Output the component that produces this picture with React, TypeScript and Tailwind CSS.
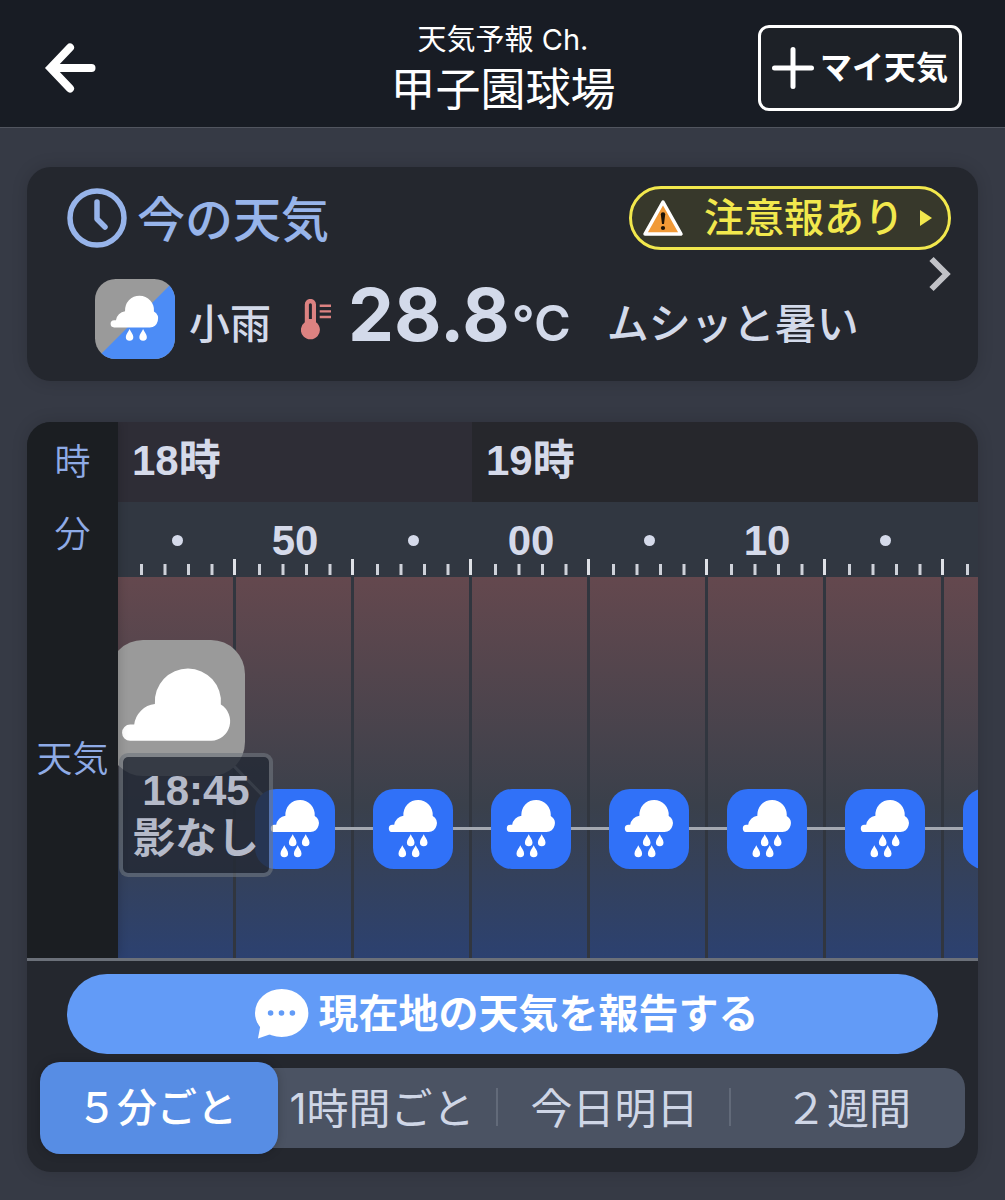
import { useState } from "react"

interface Slot {
  label: string
  weather: "cloud" | "rain"
}

const slots: Slot[] = [
  { label: "", weather: "cloud" },
  { label: "50", weather: "rain" },
  { label: "", weather: "rain" },
  { label: "00", weather: "rain" },
  { label: "", weather: "rain" },
  { label: "10", weather: "rain" },
  { label: "", weather: "rain" },
  { label: "", weather: "rain" },
]

const CLOUD =
  "M19.4 43a3.6 3.6 0 0 1 0-7.2h1.8A10.4 10.4 0 0 1 30.4 26.7A14.7 14.7 0 1 1 59.7 26.9A8.7 8.7 0 0 1 55.5 43z"
const DROP = "c1 3 3.8 5 3.8 8.1a3.8 3.8 0 0 1-7.6 0c0-3.1 2.8-5.1 3.8-8.1z"

function CloudyIcon() {
  return (
    <svg viewBox="0 0 136 136" className="size-[136px] shrink-0" aria-hidden="true">
      <rect width="136" height="136" rx="34" fill="#9a9a9a" />
      <path d={CLOUD} fill="#fff" transform="translate(-22.5 4) scale(2.25)" />
    </svg>
  )
}

function RainIcon() {
  return (
    <svg viewBox="0 0 80 80" className="size-20 shrink-0" aria-hidden="true">
      <rect width="80" height="80" rx="21" fill="#3071f8" />
      <path
        d={`${CLOUD}M37.7 45.3${DROP}M50.7 45.3${DROP}M29.3 56.3${DROP}M42.7 56.3${DROP}`}
        fill="#fff"
      />
    </svg>
  )
}

function LightRainIcon() {
  return (
    <svg viewBox="0 0 81 81" className="size-20 shrink-0" aria-hidden="true">
      <clipPath id="light-rain-tile">
        <rect width="81" height="81" rx="21" />
      </clipPath>
      <g clipPath="url(#light-rain-tile)">
        <rect width="81" height="81" fill="#9a9a9a" />
        <path d="M82 0V82H0z" fill="#4c8cf6" />
      </g>
      <path d={CLOUD} fill="#fff" transform="translate(0 6)" />
      <path d={`M35 50.7${DROP}M48.7 50.7${DROP}`} fill="#fff" />
    </svg>
  )
}

function Ruler() {
  return (
    <svg viewBox="0 0 118 16" className="h-4 w-full" aria-hidden="true">
      <path d="M23.5 5v11M47 5v11M70.5 5v11M94 5v11" stroke="#cfd2da" strokeWidth="3" />
      <path d="M116.5 0v16" stroke="#dfe1e6" strokeWidth="3" />
    </svg>
  )
}

function Header() {
  return (
    <header className="grid h-32 grid-cols-[1fr_auto_1fr] items-center border-b border-[#51555f] bg-[#181c24] pt-2 pr-[43px] pl-11 text-white">
      <button type="button" aria-label="戻る" className="justify-self-start">
        <svg viewBox="0 0 52 50" className="h-[50px] w-[52px]" fill="none" stroke="currentColor" strokeWidth="8" aria-hidden="true">
          <path d="M26 4.5L6.5 25L26 45.5M9 25H47.5" strokeLinecap="round" />
        </svg>
      </button>
      <div className="pt-1 text-center">
        <p className="text-[29px] leading-10">天気予報 Ch.</p>
        <h1 className="text-[45px] leading-[60px]">甲子園球場</h1>
      </div>
      <button
        type="button"
        className="flex h-[86px] items-center gap-1.5 justify-self-end rounded-[11px] border-[3px] border-white bg-[#1d2127] px-[11px] text-[32px] font-bold whitespace-nowrap"
      >
        <svg viewBox="0 0 42 42" className="size-[42px]" stroke="currentColor" strokeWidth="5" strokeLinecap="round" aria-hidden="true">
          <path d="M21 2.5v37M2.5 21h37" />
        </svg>
        マイ天気
      </button>
    </header>
  )
}

function CurrentWeather() {
  return (
    <section className="relative rounded-3xl bg-[#24272e] pt-[19px] pr-[27px] pb-[22px] pl-10 shadow-[0_0_16px_rgba(0,0,0,0.15)]">
      <div className="flex items-center justify-between">
        <h2 className="flex items-center gap-2.5 text-[48px] leading-[60px] font-medium text-[#97b4ea]">
          <svg viewBox="0 0 60 60" className="size-[60px]" fill="none" stroke="currentColor" strokeWidth="5.5" strokeLinecap="round" strokeLinejoin="round" aria-hidden="true">
            <circle cx="30" cy="30" r="27" />
            <path d="M30 14v17l8 8" />
          </svg>
          <span className="pt-1">今の天気</span>
        </h2>
        <button
          type="button"
          className="flex h-16 items-center rounded-full border-[3px] border-[#f2e84d] bg-[#37382b] pr-4 pl-2.5 text-[40px] leading-[56px] font-medium text-[#f2e84d]"
        >
          <svg viewBox="0 0 42 38" className="mr-5 h-[38px] w-[42px]" aria-hidden="true">
            <path d="M21 3L39 35H3z" fill="#f19a37" stroke="#fff" strokeWidth="3.5" strokeLinejoin="round" />
            <path d="M18.8 15.5a2.2 2.2 0 0 1 4.4 0l-1.2 9.5h-2z" fill="#1b1205" />
            <circle cx="21" cy="29" r="2.1" fill="#1b1205" />
          </svg>
          注意報あり
          <svg viewBox="0 0 12 16" className="ml-4 h-4 w-3" fill="currentColor" aria-hidden="true">
            <path d="M0 0L12 8L0 16z" />
          </svg>
        </button>
      </div>
      <div className="mt-[29px] flex items-center pl-7 whitespace-nowrap text-[#d3daea]">
        <LightRainIcon />
        <p className="ml-3.5 pt-2.5 text-[41px] leading-[60px] font-medium">小雨</p>
        <svg viewBox="0 0 31 41" className="ml-[30px] h-[41px] w-[31px] shrink-0" aria-hidden="true">
          <path
            d="M3.8 5.5a5.6 5.6 0 0 1 11.2 0V23.2a9.5 9.5 0 1 1-11.2 0zM9.4 4.2a1.5 1.5 0 0 0-1.5 1.5V20h3V5.7a1.5 1.5 0 0 0-1.5-1.5z"
            fill="#dc8281"
            fillRule="evenodd"
          />
          <path d="M18.7 6.7H30M18.7 12.4H30M18.7 18H30" stroke="#dc8281" strokeWidth="2.4" />
        </svg>
        <p className="ml-4 flex items-baseline pb-2 leading-[72px] font-bold">
          <span className="text-[73px]">28.8</span>
          <span className="ml-0.5 text-[50px] leading-[48px] font-semibold">°C</span>
        </p>
        <p className="ml-9 pt-2.5 text-[42px] leading-[60px] font-medium">ムシッと暑い</p>
      </div>
      <a href="#now" aria-label="今の天気の詳細" className="absolute top-1/2 right-[27px] -translate-y-1/2 text-[#c1c2c7]">
        <svg viewBox="0 0 22 36" className="h-9 w-[22px]" fill="none" stroke="currentColor" strokeWidth="6" aria-hidden="true">
          <path d="M2.5 3L17.5 18L2.5 33" />
        </svg>
      </a>
    </section>
  )
}

function Timeline() {
  return (
    <div className="flex overflow-hidden rounded-t-3xl border-b-[3px] border-[#6b7079]">
      <div className="z-10 flex w-[91px] shrink-0 flex-col bg-[#1b1e22] text-center text-4xl font-[350] text-[#8fabe6] shadow-[0_0_10px_rgba(0,0,0,0.2)]">
        <div className="h-20 leading-[80px]">時</div>
        <div className="h-16 leading-[64px]">分</div>
        <div className="flex flex-1 items-center justify-center pb-1.5">天気</div>
      </div>
      <div className="min-w-0 flex-1 overflow-hidden bg-[#313741]">
        <div className="flex h-20 font-['Liberation_Sans','Noto_Sans_CJK_JP',sans-serif] text-[42px] leading-[78px] font-bold text-[#d5daea]">
          <div className="w-[354px] shrink-0 bg-[#2e2d36] pl-3.5">18時</div>
          <div className="flex-1 bg-[#26272c] pl-3.5">19時</div>
        </div>
        <div className="flex h-[75px]">
          {slots.map((slot, i) => (
            <div key={i} className="flex w-[118px] shrink-0 flex-col items-center justify-end pb-0.5">
              <div className="flex flex-1 items-end font-['Liberation_Sans',sans-serif] text-[42px] leading-9 font-bold text-[#d5daea]">
                {slot.label || <span className="mb-[13px] size-[11px] rounded-full bg-[#d5daea]" />}
              </div>
              <Ruler />
            </div>
          ))}
        </div>
        <div className="relative flex h-[381px] bg-linear-to-b from-[#64484e] via-[#3a404b] via-60% to-[#2c4170]">
          {slots.map((_, i) => (
            <div key={i} className="w-[118px] shrink-0 border-r-[3px] border-[#31363f]" />
          ))}
          <svg className="absolute inset-0 h-full w-full" aria-hidden="true">
            <path d="M59 131L177 251.5H2000" fill="none" stroke="#a3a8b1" strokeWidth="3" />
          </svg>
          <div className="absolute inset-y-0 left-0 flex">
            {slots.map((slot, i) => (
              <div
                key={i}
                className={`flex w-[118px] shrink-0 items-start justify-center ${slot.weather === "cloud" ? "pt-[63px]" : "pt-[212px]"}`}
              >
                {slot.weather === "cloud" ? <CloudyIcon /> : <RainIcon />}
              </div>
            ))}
          </div>
          <div className="absolute top-44 left-px rounded-[9px] border-4 border-[#70767f]/60 bg-[#242a36]/85 bg-clip-padding px-2.5 pt-2.5 pb-2.5 text-center font-['Liberation_Sans','Noto_Sans_CJK_JP',sans-serif] text-[42px] leading-[48px] font-bold whitespace-nowrap text-[#b5bac9]">
            <p>18:45</p>
            <p>影なし</p>
          </div>
        </div>
      </div>
    </div>
  )
}

const tabs = ["５分ごと", "1時間ごと", "今日明日", "２週間"]

function RangeTabs() {
  const [active, setActive] = useState(0)

  return (
    <div className="my-1.5 grid h-20 grid-cols-[238fr_220fr_233fr_234fr] rounded-[20px] bg-[#4b5363]" role="tablist">
      {tabs.map((tab, i) => (
        <button
          key={tab}
          type="button"
          role="tab"
          aria-selected={i === active}
          onClick={() => setActive(i)}
          className={`relative whitespace-nowrap ${
            i === active
              ? "z-10 -my-1.5 rounded-[20px] bg-[#578de4] text-[40px] font-medium text-white shadow-[0_0_10px_rgba(0,0,0,0.2)]"
              : "text-[42px] text-[#cfd6e6]"
          } ${i === 0 ? "pr-1" : ""} ${i === 1 ? "pr-3" : ""}`}
        >
          {tab}
          {i > 0 && i < 3 && <span className="absolute top-5 right-0 h-[38px] w-0.5 bg-[#626a79]" />}
        </button>
      ))}
    </div>
  )
}

export default function App() {
  return (
    <div className="min-h-screen bg-[#363a45] font-['Inter','Noto_Sans_CJK_JP',sans-serif]" lang="ja">
      <Header />
      <main className="flex flex-col gap-[41px] px-[27px] pt-[39px] pb-7">
        <CurrentWeather />
        <section className="rounded-3xl bg-[#24272e] shadow-[0_0_16px_rgba(0,0,0,0.15)]">
          <Timeline />
          <div className="flex flex-col gap-2 px-[13px] pt-[13px] pb-[18px]">
            <button
              type="button"
              className="mx-[27px] flex h-20 items-center justify-center gap-2.5 rounded-full bg-[#629bf7] pl-2 text-[40px] font-bold whitespace-nowrap text-white"
            >
              <svg viewBox="0 0 54 50" className="h-[50px] w-[54px]" aria-hidden="true">
                <ellipse cx="26.7" cy="24" rx="26.7" ry="24" fill="#fff" />
                <path d="M5.5 36L3 49.5L16 45z" fill="#fff" />
                <g fill="#629bf7">
                  <circle cx="15.6" cy="24" r="2.8" />
                  <circle cx="26.5" cy="24" r="2.8" />
                  <circle cx="37.4" cy="24" r="2.8" />
                </g>
              </svg>
              現在地の天気を報告する
            </button>
            <RangeTabs />
          </div>
        </section>
      </main>
    </div>
  )
}
